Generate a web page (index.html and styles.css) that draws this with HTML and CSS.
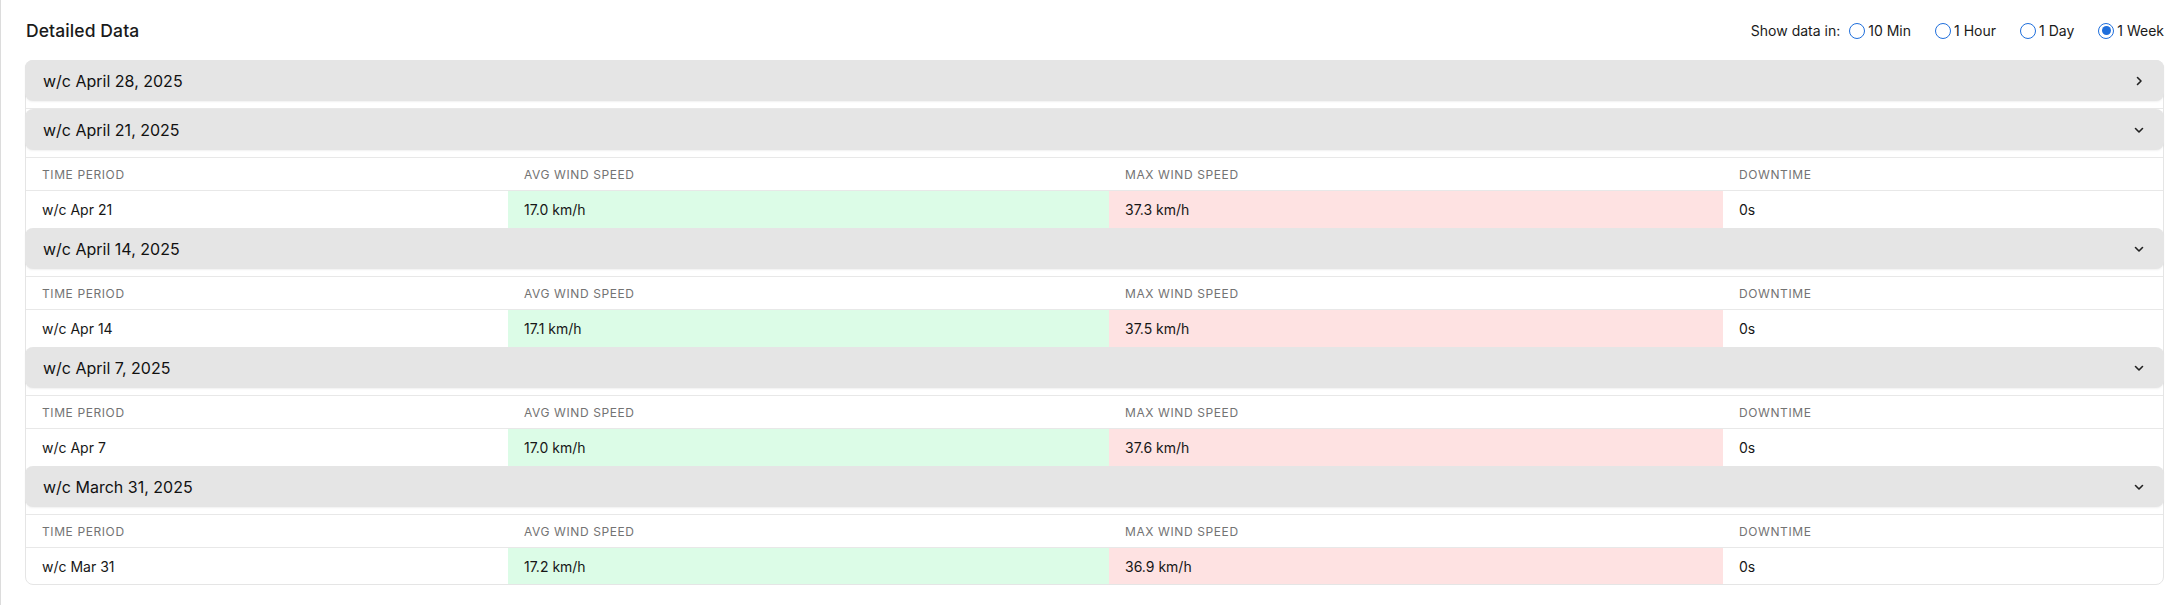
FILE: index.html
```html
<!DOCTYPE html>
<html lang="en">
<head>
<meta charset="utf-8">
<title>Detailed Data</title>
<link rel="stylesheet" href="styles.css">
</head>
<body>
<div class="page">
  <section class="panel">
    <div class="topbar">
      <h2 class="title">Detailed Data</h2>
      <div class="filter">
        <span class="filter-label">Show data in:</span>
        <label class="opt"><span class="radio"></span>10 Min</label>
        <label class="opt"><span class="radio"></span>1 Hour</label>
        <label class="opt"><span class="radio"></span>1 Day</label>
        <label class="opt"><span class="radio checked"></span>1 Week</label>
      </div>
    </div>

    <div class="accordion">
      <div class="item">
        <div class="item-head">
          <span class="item-title">w/c April 28, 2025</span>
          <svg class="chev" viewBox="0 0 16 16" width="16" height="16"><path d="M6.5 4.5l3.5 3.5-3.5 3.5"/></svg>
        </div>
        <div class="item-body"></div>
      </div>

      <div class="item">
        <div class="item-head">
          <span class="item-title">w/c April 21, 2025</span>
          <svg class="chev" viewBox="0 0 16 16" width="16" height="16"><path d="M4.5 6.5l3.5 3.5 3.5-3.5"/></svg>
        </div>
        <div class="item-body">
          <div class="row thead">
            <div class="cell">Time Period</div>
            <div class="cell">Avg Wind Speed</div>
            <div class="cell">Max Wind Speed</div>
            <div class="cell">Downtime</div>
          </div>
          <div class="row tdata">
            <div class="cell">w/c Apr 21</div>
            <div class="cell avg">17.0 km/h</div>
            <div class="cell max">37.3 km/h</div>
            <div class="cell">0s</div>
          </div>
        </div>
      </div>

      <div class="item">
        <div class="item-head">
          <span class="item-title">w/c April 14, 2025</span>
          <svg class="chev" viewBox="0 0 16 16" width="16" height="16"><path d="M4.5 6.5l3.5 3.5 3.5-3.5"/></svg>
        </div>
        <div class="item-body">
          <div class="row thead">
            <div class="cell">Time Period</div>
            <div class="cell">Avg Wind Speed</div>
            <div class="cell">Max Wind Speed</div>
            <div class="cell">Downtime</div>
          </div>
          <div class="row tdata">
            <div class="cell">w/c Apr 14</div>
            <div class="cell avg">17.1 km/h</div>
            <div class="cell max">37.5 km/h</div>
            <div class="cell">0s</div>
          </div>
        </div>
      </div>

      <div class="item">
        <div class="item-head">
          <span class="item-title">w/c April 7, 2025</span>
          <svg class="chev" viewBox="0 0 16 16" width="16" height="16"><path d="M4.5 6.5l3.5 3.5 3.5-3.5"/></svg>
        </div>
        <div class="item-body">
          <div class="row thead">
            <div class="cell">Time Period</div>
            <div class="cell">Avg Wind Speed</div>
            <div class="cell">Max Wind Speed</div>
            <div class="cell">Downtime</div>
          </div>
          <div class="row tdata">
            <div class="cell">w/c Apr 7</div>
            <div class="cell avg">17.0 km/h</div>
            <div class="cell max">37.6 km/h</div>
            <div class="cell">0s</div>
          </div>
        </div>
      </div>

      <div class="item">
        <div class="item-head">
          <span class="item-title">w/c March 31, 2025</span>
          <svg class="chev" viewBox="0 0 16 16" width="16" height="16"><path d="M4.5 6.5l3.5 3.5 3.5-3.5"/></svg>
        </div>
        <div class="item-body">
          <div class="row thead">
            <div class="cell">Time Period</div>
            <div class="cell">Avg Wind Speed</div>
            <div class="cell">Max Wind Speed</div>
            <div class="cell">Downtime</div>
          </div>
          <div class="row tdata last">
            <div class="cell">w/c Mar 31</div>
            <div class="cell avg">17.2 km/h</div>
            <div class="cell max">36.9 km/h</div>
            <div class="cell">0s</div>
          </div>
        </div>
      </div>
    </div>
  </section>
</div>
</body>
</html>
```

FILE: styles.css
```css
* { box-sizing: border-box; }

html, body {
  margin: 0;
  padding: 0;
  background: #ffffff;
}

body {
  font-family: Inter, "Liberation Sans", Arial, sans-serif;
  color: #171717;
}

.page {
  border-left: 1px solid #dcdcdc;
  min-height: 605px;
  padding: 0 17px 0 24px;
}

.topbar {
  height: 60px;
  display: flex;
  align-items: center;
  justify-content: space-between;
}

.title {
  margin: 0;
  font-size: 17.5px;
  font-weight: 500;
  letter-spacing: 0.1px;
  color: #1a1a1a;
  padding-left: 1px;
}

.filter {
  display: flex;
  align-items: center;
  font-size: 14px;
  color: #1a1a1a;
  padding-top: 1px;
}

.filter-label {
  margin-right: 9px;
}

.opt {
  display: flex;
  align-items: center;
  gap: 3px;
  margin-right: 24px;
}

.opt:last-child {
  margin-right: 0;
}

.radio {
  width: 16px;
  height: 16px;
  border: 1.5px solid #1f6fdc;
  border-radius: 50%;
  display: flex;
  align-items: center;
  justify-content: center;
  background: #fff;
}

.radio.checked::after {
  content: "";
  width: 9px;
  height: 9px;
  border-radius: 50%;
  background: #1f6fdc;
}

.accordion {
  border: 1px solid #e5e5e5;
  border-radius: 8px;
}

.item-head {
  height: 41px;
  margin: -1px -1px 7px -1px;
  background: #e5e5e5;
  border-radius: 8px;
  box-shadow: 0 1px 2px rgba(0, 0, 0, 0.06);
  display: flex;
  align-items: center;
  justify-content: space-between;
  padding: 0 17px 0 18px;
  position: relative;
}

.item:first-child .item-head {
  margin-top: -1px;
}

.item + .item .item-head {
  margin-top: 0;
}

.item-title {
  font-size: 16px;
  font-weight: 400;
  color: #111111;
}

.chev {
  display: block;
  fill: none;
  stroke: #222;
  stroke-width: 1.6;
  stroke-linecap: round;
  stroke-linejoin: round;
}

.item-body {
  border-top: 1px solid #e8e8e8;
}

.row {
  display: grid;
  grid-template-columns: 482fr 601fr 614fr 440fr;
}

.cell {
  padding: 0 16px;
  display: flex;
  align-items: center;
}

.thead {
  height: 33px;
  border-bottom: 1px solid #e8e8e8;
}

.thead .cell {
  font-size: 12px;
  text-transform: uppercase;
  letter-spacing: 0.6px;
  color: #737373;
}

.tdata {
  height: 37px;
}

.tdata .cell {
  font-size: 14px;
  color: #171717;
}

.tdata.last {
  height: 36px;
}

.cell.avg {
  background: #dcfce7;
}

.cell.max {
  background: #fee2e2;
}
```
